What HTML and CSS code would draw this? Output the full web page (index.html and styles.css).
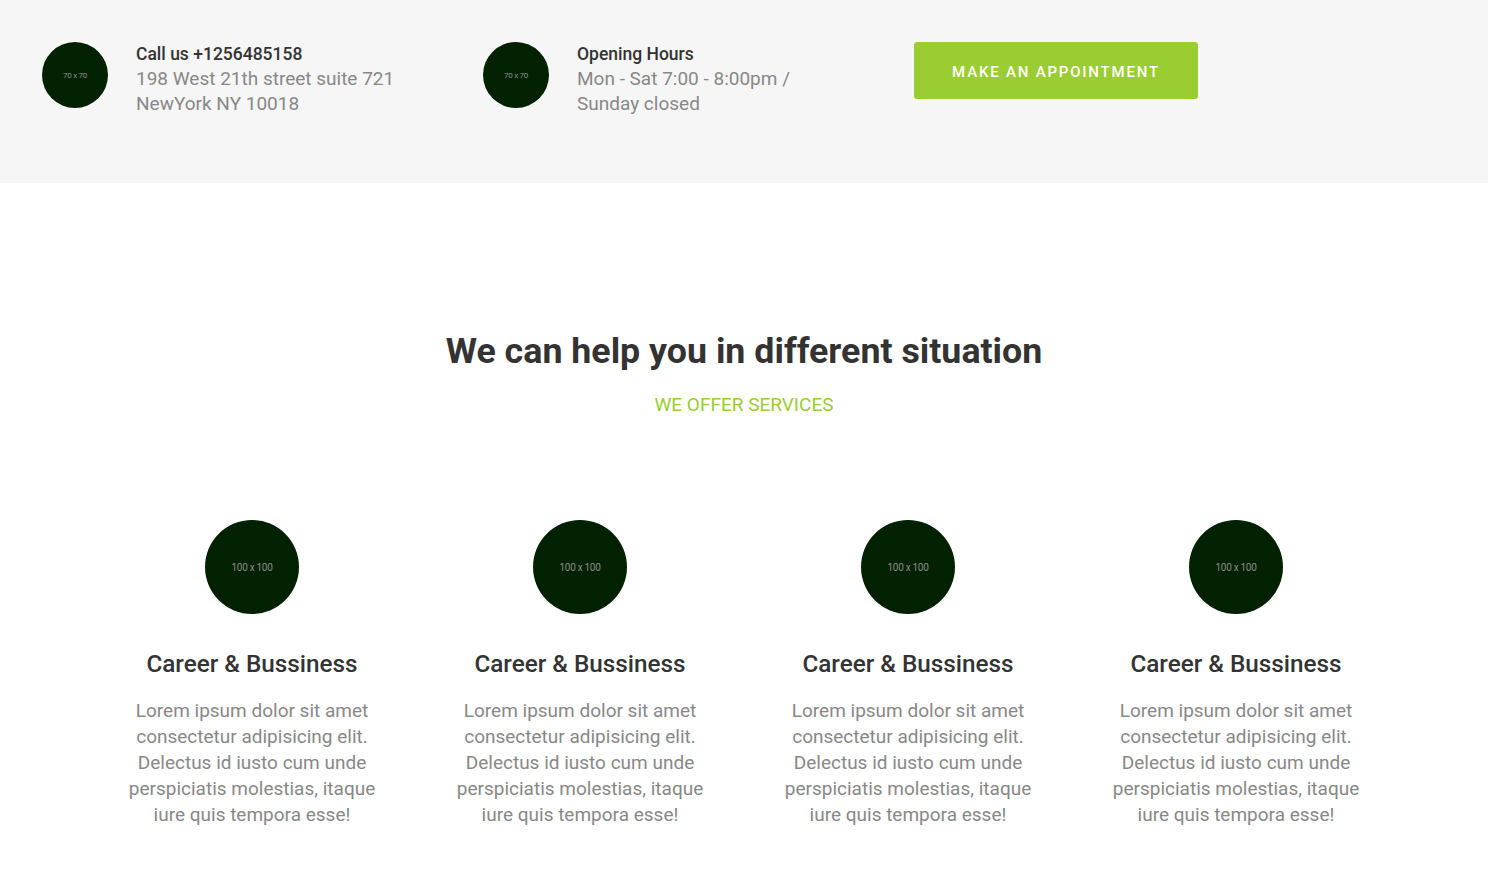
FILE: index.html
```html
<!DOCTYPE html>
<html lang="en">
<head>
<meta charset="utf-8">
<title>Services</title>
<link rel="stylesheet" href="styles.css">
</head>
<body>
<header class="topbar">
  <div class="info">
    <div class="thumb thumb-sm">70 x 70</div>
    <div class="info-text">
      <div class="info-title">Call us +1256485158</div>
      <div class="info-line">198 West 21th street suite 721<br>NewYork NY 10018</div>
    </div>
  </div>
  <div class="info">
    <div class="thumb thumb-sm">70 x 70</div>
    <div class="info-text">
      <div class="info-title">Opening Hours</div>
      <div class="info-line">Mon - Sat 7:00 - 8:00pm /<br>Sunday closed</div>
    </div>
  </div>
  <div class="cta-wrap">
    <a class="cta" href="#">MAKE AN APPOINTMENT</a>
  </div>
</header>

<section class="services">
  <h2 class="heading">We can help you in different situation</h2>
  <p class="subheading">WE OFFER SERVICES</p>
  <div class="grid">
    <div class="service">
      <div class="thumb thumb-lg">100 x 100</div>
      <h3 class="service-title">Career &amp; Bussiness</h3>
      <p class="service-text">Lorem ipsum dolor sit amet consectetur adipisicing elit. Delectus id iusto cum unde perspiciatis molestias, itaque iure quis tempora esse!</p>
    </div>
    <div class="service">
      <div class="thumb thumb-lg">100 x 100</div>
      <h3 class="service-title">Career &amp; Bussiness</h3>
      <p class="service-text">Lorem ipsum dolor sit amet consectetur adipisicing elit. Delectus id iusto cum unde perspiciatis molestias, itaque iure quis tempora esse!</p>
    </div>
    <div class="service">
      <div class="thumb thumb-lg">100 x 100</div>
      <h3 class="service-title">Career &amp; Bussiness</h3>
      <p class="service-text">Lorem ipsum dolor sit amet consectetur adipisicing elit. Delectus id iusto cum unde perspiciatis molestias, itaque iure quis tempora esse!</p>
    </div>
    <div class="service">
      <div class="thumb thumb-lg">100 x 100</div>
      <h3 class="service-title">Career &amp; Bussiness</h3>
      <p class="service-text">Lorem ipsum dolor sit amet consectetur adipisicing elit. Delectus id iusto cum unde perspiciatis molestias, itaque iure quis tempora esse!</p>
    </div>
  </div>
</section>
</body>
</html>
```

FILE: styles.css
```css
* { box-sizing: border-box; }
html, body { margin: 0; padding: 0; }
body {
  font-family: Roboto, "Liberation Sans", Arial, sans-serif;
  background: #ffffff;
  color: #333333;
}

.topbar {
  background: #f6f6f6;
  height: 183px;
  padding: 42px 0 0 42px;
  display: grid;
  grid-template-columns: 441px 431px 284px;
  align-items: start;
}

.info {
  display: flex;
  align-items: flex-start;
  gap: 28px;
}

.thumb {
  flex: none;
  border-radius: 50%;
  background: #022100;
  color: #8a8f88;
  display: flex;
  align-items: center;
  justify-content: center;
  letter-spacing: -0.3px;
}
.thumb-sm {
  width: 66px;
  height: 66px;
  font-size: 8px;
}
.thumb-lg {
  width: 94px;
  height: 94px;
  font-size: 10px;
  margin: 0 auto;
}

.info-text {
  margin-top: -1px;
  font-size: 19px;
  line-height: 25px;
}
.info-title {
  font-size: 17.5px;
  font-weight: 500;
  color: #333333;
  padding-top: 1px;
  line-height: 24px;
}
.info-line {
  color: #888888;
}

.cta {
  display: flex;
  align-items: center;
  justify-content: center;
  width: 284px;
  height: 57px;
  padding-top: 2px;
  background: #9acd32;
  color: #ffffff;
  text-decoration: none;
  font-size: 15px;
  font-weight: 500;
  letter-spacing: 1.8px;
  border-radius: 3px;
}

.services {
  width: 1312px;
  margin: 0 auto;
  padding-top: 147px;
  text-align: center;
}

.heading {
  margin: 0;
  font-size: 35.75px;
  line-height: 43px;
  font-weight: 700;
  color: #333333;
}
.subheading {
  margin: 21px 0 0;
  font-size: 19px;
  line-height: 22px;
  color: #9acd32;
}

.grid {
  margin-top: 104px;
  display: grid;
  grid-template-columns: repeat(4, 1fr);
}

.service {
  padding: 0 30px;
}
.service-title {
  margin: 34px 0 0;
  font-size: 24.3px;
  line-height: 32px;
  font-weight: 500;
  color: #333333;
}
.service-text {
  margin: 18px 0 0;
  font-size: 19px;
  line-height: 26px;
  color: #888888;
}
```
